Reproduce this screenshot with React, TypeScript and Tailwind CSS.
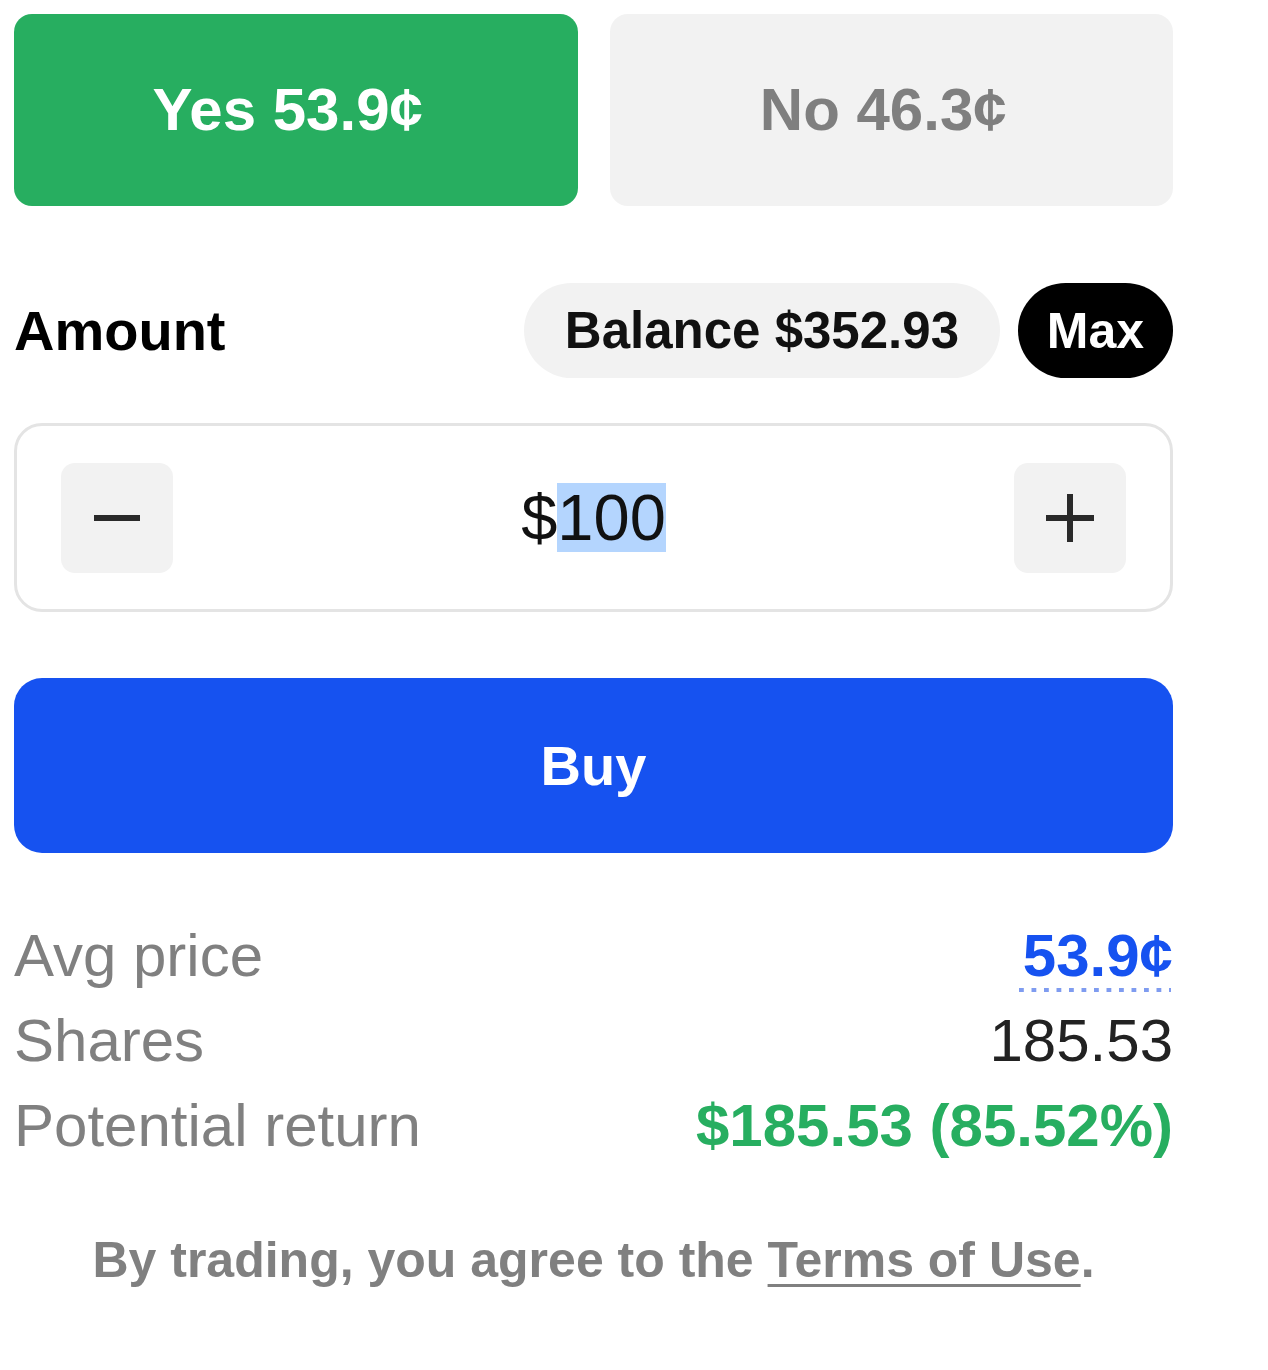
import React from "react";

export default function App() {
  const font = { fontFamily: '"Liberation Sans", Arial, Helvetica, sans-serif' };
  return (
    <div
      className="w-[1268px] h-[1370px] bg-white overflow-hidden pt-[14px] pl-[14px]"
      style={font}
    >
      <div className="w-[1159px] flex flex-col">
        {/* Yes / No */}
        <div className="flex gap-[32px]">
          <button className="flex-1 h-[192px] rounded-[18px] bg-[#27ae60] text-white text-[60px] font-bold pr-[16px] flex items-center justify-center">
            Yes 53.9¢
          </button>
          <button className="flex-1 h-[192px] rounded-[18px] bg-[#f2f2f2] text-[#7f7f7f] text-[60px] font-bold pr-[16px] flex items-center justify-center">
            No 46.3¢
          </button>
        </div>

        {/* Amount row */}
        <div className="mt-[77px] h-[95px] flex items-center justify-between">
          <span className="text-[56px] font-bold text-black leading-none">Amount</span>
          <div className="flex items-center gap-[18px]">
            <div className="h-[95px] px-[41px] rounded-full bg-[#f2f2f2] flex items-center text-[51px] font-bold text-[#111] leading-none">
              Balance $352.93
            </div>
            <div className="h-[95px] w-[155px] rounded-full bg-black flex items-center justify-center text-[50px] font-bold text-white leading-none">
              Max
            </div>
          </div>
        </div>

        {/* Input */}
        <div className="mt-[45px] h-[189px] rounded-[28px] border-[3px] border-[#e4e4e4] flex items-center justify-between px-[44px]">
          <div className="w-[112px] h-[110px] rounded-[14px] bg-[#f2f2f2] flex items-center justify-center">
            <svg width="48" height="48" viewBox="0 0 48 48">
              <line x1="1" y1="24" x2="47" y2="24" stroke="#2a2a2a" strokeWidth="6" />
            </svg>
          </div>
          <div className="text-[65px] text-[#111] leading-[69px] flex">
            <span>$</span>
            <span className="bg-[#b4d5fe]">100</span>
          </div>
          <div className="w-[112px] h-[110px] rounded-[14px] bg-[#f2f2f2] flex items-center justify-center">
            <svg width="50" height="50" viewBox="0 0 50 50">
              <line x1="1" y1="25" x2="49" y2="25" stroke="#2a2a2a" strokeWidth="6" />
              <line x1="25" y1="1" x2="25" y2="49" stroke="#2a2a2a" strokeWidth="6" />
            </svg>
          </div>
        </div>

        {/* Buy */}
        <button className="mt-[66px] h-[175px] rounded-[28px] bg-[#1652f0] text-white text-[56px] font-bold flex items-center justify-center">
          Buy
        </button>

        {/* Stats */}
        <div className="mt-[60px] flex flex-col text-[60px]">
          <div className="h-[85px] flex items-center justify-between">
            <span className="text-[#808080]">Avg price</span>
            <span className="relative text-[#1652f0] font-bold">
              53.9¢
              <span className="absolute left-[-4px] right-[2px] bottom-[9px] h-[4px] bg-[linear-gradient(to_right,#7f9cf0_35%,transparent_35%)] bg-[length:12.5px_4px] bg-repeat-x" />
            </span>
          </div>
          <div className="h-[85px] flex items-center justify-between">
            <span className="text-[#808080]">Shares</span>
            <span className="text-[#222]">185.53</span>
          </div>
          <div className="h-[85px] flex items-center justify-between">
            <span className="text-[#808080]">Potential return</span>
            <span className="text-[#27ae60] font-bold">$185.53 (85.52%)</span>
          </div>
        </div>

        {/* Footer */}
        <div className="mt-[62px] h-[60px] flex items-center justify-center text-[50px] font-bold text-[#808080]">
          <span>
            By trading, you agree to the{" "}
            <span className="underline decoration-[3px] underline-offset-[7px]">Terms of Use</span>.
          </span>
        </div>
      </div>
    </div>
  );
}
